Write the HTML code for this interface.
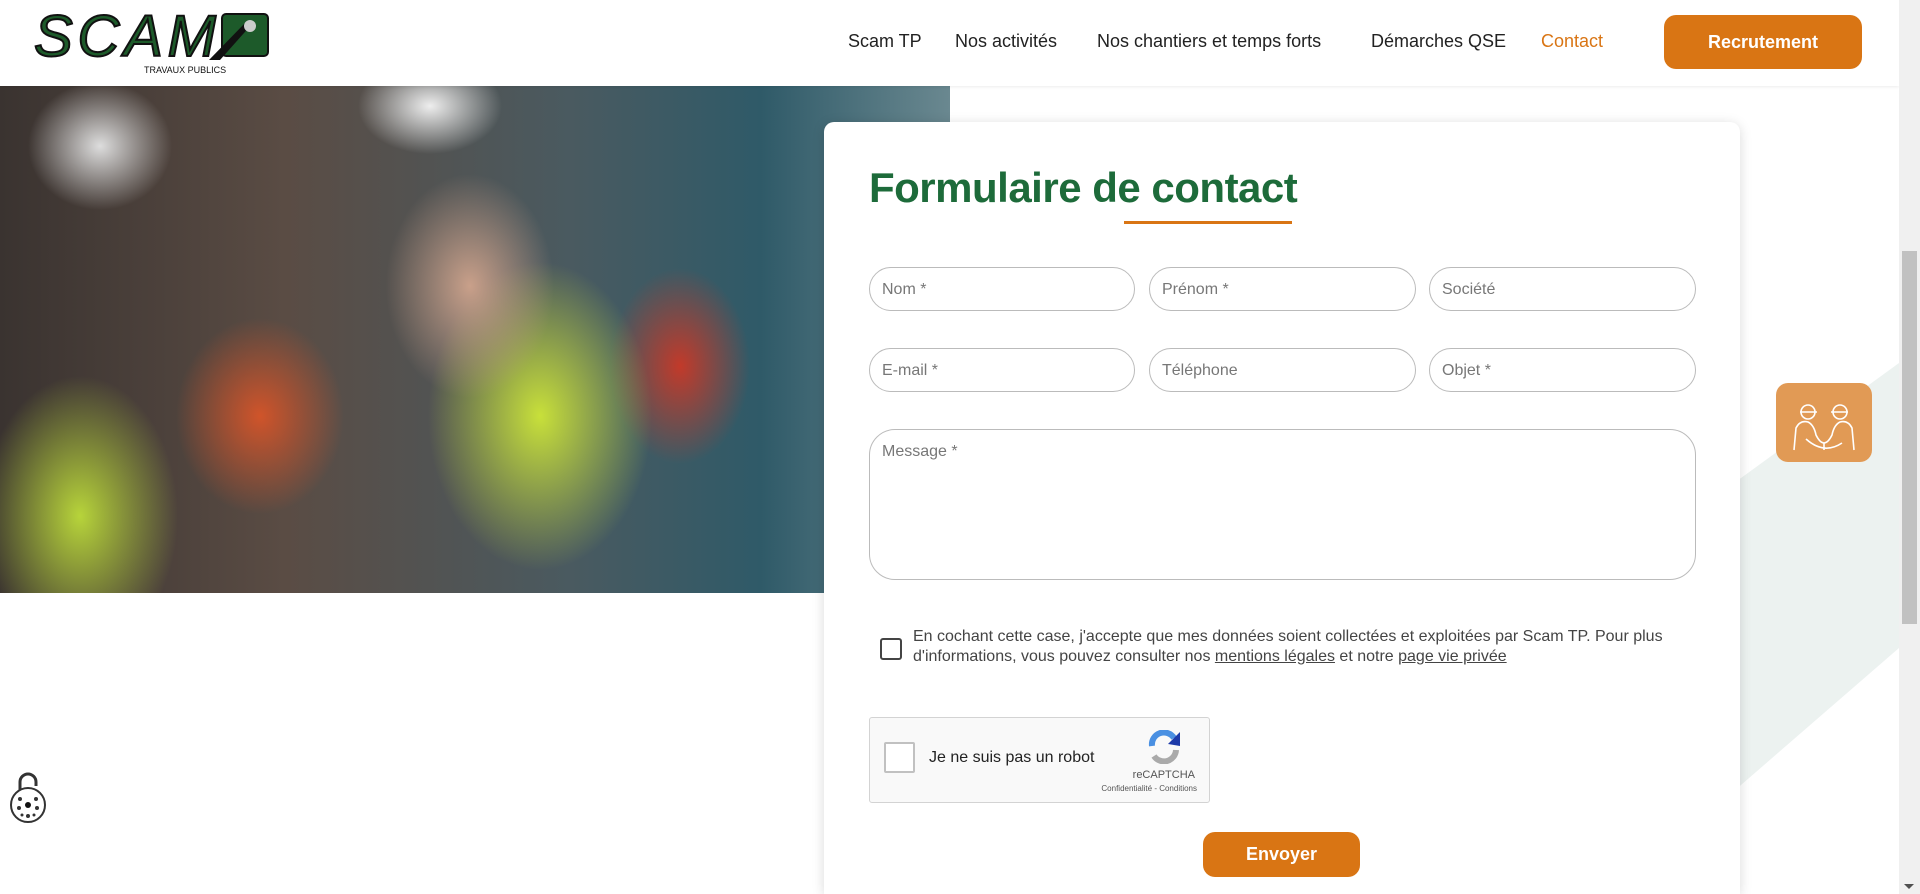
<!DOCTYPE html>
<html><head><meta charset="utf-8"><style>
*{box-sizing:border-box;margin:0;padding:0}
body{width:1920px;height:894px;overflow:hidden;background:#fff;font-family:"Liberation Sans",sans-serif;position:relative}
.hdr{position:absolute;left:0;top:0;width:1899px;height:86px;background:#fff;z-index:5;box-shadow:0 1px 3px rgba(0,0,0,.08)}
.nav a{position:absolute;top:31px;font-size:18px;color:#222;text-decoration:none;white-space:nowrap}
.btn{position:absolute;background:#d97514;color:#fff;border-radius:12px;font-weight:bold;text-align:center}
.photo{position:absolute;left:0;top:86px;width:950px;height:507px;background:
radial-gradient(ellipse 120px 160px at 470px 200px,#c9a08a 0,rgba(0,0,0,0) 70%),
radial-gradient(ellipse 160px 220px at 540px 330px,#c8e03a 0,rgba(0,0,0,0) 70%),
radial-gradient(ellipse 140px 200px at 80px 430px,#b7d43a 0,rgba(0,0,0,0) 70%),
radial-gradient(ellipse 120px 140px at 260px 330px,#d0542a 0,rgba(0,0,0,0) 70%),
radial-gradient(ellipse 90px 60px at 430px 20px,#eee 0,rgba(0,0,0,0) 80%),
radial-gradient(ellipse 90px 80px at 100px 60px,#ddd 0,rgba(0,0,0,0) 80%),
radial-gradient(ellipse 100px 140px at 680px 280px,#c23a2a 0,rgba(0,0,0,0) 70%),
linear-gradient(90deg,#3a3330 0,#5a4c44 30%,#4a5a60 60%,#2f5a68 80%,#6a8890 100%)}
.stripe{position:absolute;left:0;top:0;width:1899px;height:894px}
.card{position:absolute;left:824px;top:122px;width:916px;height:772px;background:#fff;border-radius:10px 10px 0 0;box-shadow:0 2px 12px rgba(0,0,0,.15)}
h1{position:absolute;left:45px;top:42px;font-size:42px;color:#1d6b3a;font-weight:bold;letter-spacing:-0.5px}
.ul{position:absolute;left:300px;top:99px;width:168px;height:3px;background:#d97514}
.in{position:absolute;height:44px;border:1px solid #bbb;border-radius:22px;font-size:16px;color:#777;padding:13px 12px}
.sb{position:absolute;right:0;top:0;width:21px;height:894px;background:#f0f0f0;z-index:6}
</style></head><body>
<svg class="stripe" viewBox="0 0 1899 894"><polygon points="1741,478 1899,363 1899,648 1741,785 1500,1000 1000,1000 1000,1000" fill="#ecf2f0"/></svg>
<div class="photo"></div>
<div class="hdr">
<svg style="position:absolute;left:34px;top:10px" width="240" height="66" viewBox="0 0 240 66">
<text x="0" y="46" font-family="Liberation Sans" font-size="58" font-style="italic" fill="#1d5a2a" stroke="#111" stroke-width="2" letter-spacing="-2" textLength="180">SCAM</text>
<rect x="188" y="4" width="46" height="42" rx="4" fill="#1d5a2a" stroke="#111" stroke-width="2"/>
<path d="M175 50 L212 12 L218 14 L186 50Z" fill="#111"/>
<circle cx="216" cy="16" r="6" fill="#ccc"/>
<text x="110" y="63" font-size="9" fill="#111" font-family="Liberation Sans">TRAVAUX PUBLICS</text></svg>
<div class="nav"><a style="left:848px">Scam TP</a><a style="left:955px">Nos activités</a><a style="left:1097px">Nos chantiers et temps forts</a><a style="left:1371px">Démarches QSE</a><a style="left:1541px;color:#d97514">Contact</a></div>
<div class="btn" style="left:1664px;top:15px;width:198px;height:54px;line-height:54px;font-size:18px">Recrutement</div>
</div>
<div class="card">
<h1>Formulaire de contact</h1><div class="ul"></div>
<div class="in" style="left:45px;top:145px;width:266px">Nom *</div>
<div class="in" style="left:325px;top:145px;width:267px">Prénom *</div>
<div class="in" style="left:605px;top:145px;width:267px">Société</div>
<div class="in" style="left:45px;top:226px;width:266px">E-mail *</div>
<div class="in" style="left:325px;top:226px;width:267px">Téléphone</div>
<div class="in" style="left:605px;top:226px;width:267px">Objet *</div>
<div class="in" style="left:45px;top:307px;width:827px;height:151px;border-radius:26px">Message *</div>
<div style="position:absolute;left:56px;top:516px;width:22px;height:22px;border:2px solid #444;border-radius:3px"></div>
<div style="position:absolute;left:89px;top:505px;width:790px;font-size:16px;line-height:20px;color:#444">En cochant cette case, j'accepte que mes données soient collectées et exploitées par Scam TP. Pour plus d'informations, vous pouvez consulter nos <u>mentions légales</u> et notre <u>page vie privée</u></div>
<div style="position:absolute;left:45px;top:595px;width:341px;height:86px;background:#f9f9f9;border:1px solid #d3d3d3;border-radius:3px">
<div style="position:absolute;left:14px;top:24px;width:31px;height:31px;border:2px solid #c1c1c1;border-radius:2px;background:#fff"></div>
<div style="position:absolute;left:59px;top:31px;font-size:16px;color:#222">Je ne suis pas un robot</div>
<svg style="position:absolute;left:276px;top:12px" width="36" height="34" viewBox="0 0 36 34"><path d="M6 16 A12 12 0 0 1 28 8" stroke="#4a90e2" stroke-width="6" fill="none"/><path d="M28 8 L34 2 L34 16 L22 14Z" fill="#1c3aa9"/><path d="M30 20 A12 12 0 0 1 8 26" stroke="#aaa" stroke-width="6" fill="none"/></svg>
<div style="position:absolute;right:14px;top:51px;font-size:11px;color:#555">reCAPTCHA</div>
<div style="position:absolute;right:12px;top:66px;font-size:8px;color:#555">Confidentialité - Conditions</div></div>
<div class="btn" style="left:379px;top:710px;width:157px;height:45px;line-height:45px;font-size:18px">Envoyer</div>
</div>
<div style="position:absolute;left:1776px;top:383px;width:96px;height:79px;border-radius:12px;background:#e19a55">
<svg width="96" height="79" viewBox="0 0 96 79" fill="none" stroke="#fff" stroke-width="1.6"><circle cx="32" cy="29" r="7"/><line x1="24" y1="29" x2="41" y2="29"/><circle cx="64" cy="29" r="7"/><line x1="55" y1="29" x2="72" y2="29"/><path d="M18 67 L20 45 Q24 37 32 39 Q38 42 40 52 Q44 60 48 60 Q52 60 56 52 Q58 42 64 39 Q72 37 76 45 L78 67"/><path d="M30 56 Q48 72 66 60"/><line x1="48" y1="60" x2="48" y2="67"/></svg></div>
<svg style="position:absolute;left:8px;top:768px" width="40" height="58" viewBox="0 0 40 58"><path d="M12 22 V14 A8 8 0 0 1 28 14 V18" stroke="#333" stroke-width="3" fill="none"/><circle cx="20" cy="37" r="17" fill="#fff" stroke="#333" stroke-width="2"/><circle cx="20" cy="37" r="3" fill="#111"/><g fill="#333"><circle cx="12" cy="31" r="2"/><circle cx="28" cy="31" r="2"/><circle cx="11" cy="40" r="2"/><circle cx="29" cy="40" r="2"/><circle cx="20" cy="48" r="2"/><circle cx="14" cy="47" r="1.5"/><circle cx="26" cy="47" r="1.5"/></g></svg>
<div class="sb"><div style="position:absolute;left:3px;top:251px;width:15px;height:373px;background:#c1c1c1"></div><div style="position:absolute;left:5px;bottom:5px;border-left:5px solid transparent;border-right:5px solid transparent;border-top:5px solid #505050"></div></div>
</body></html>
